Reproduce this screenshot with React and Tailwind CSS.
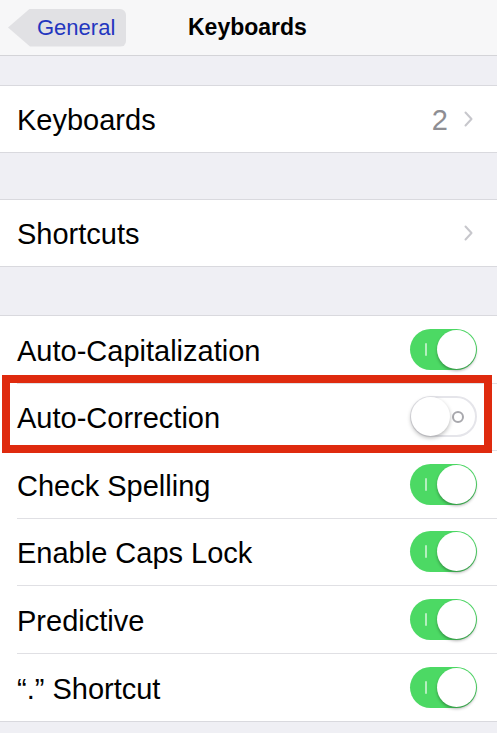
import React from "react";

const Chevron = () => (
  <svg width="9" height="16" viewBox="0 0 9 16" className="shrink-0">
    <polyline
      points="1.5,1.5 7.5,8 1.5,14.5"
      fill="none"
      stroke="#c7c7cc"
      strokeWidth="2"
      strokeLinecap="round"
      strokeLinejoin="round"
    />
  </svg>
);

const Toggle = ({ on }) =>
  on ? (
    <div className="relative w-[67px] h-[41px] rounded-full bg-[#4cd964] shrink-0">
      <div className="absolute left-[15px] top-[14px] w-[2px] h-[13px] rounded-full bg-[#b5efbf]" />
      <div className="absolute right-[1px] top-[1px] w-[39px] h-[39px] rounded-full bg-white shadow-[0_2px_3px_rgba(0,0,0,0.3)]" />
    </div>
  ) : (
    <div className="relative w-[67px] h-[41px] rounded-full bg-white border-2 border-[#e5e5ea] shrink-0">
      <div className="absolute right-[11px] top-[13px] w-[12px] h-[12px] rounded-full border-2 border-[#a8a8ad]" />
      <div className="absolute left-[-1px] top-[-1px] w-[39px] h-[39px] rounded-full bg-white shadow-[0_2px_4px_rgba(0,0,0,0.28)]" />
    </div>
  );

const toggles = [
  { label: "Auto-Capitalization", on: true },
  { label: "Auto-Correction", on: false, marked: true },
  { label: "Check Spelling", on: true },
  { label: "Enable Caps Lock", on: true },
  { label: "Predictive", on: true },
  { label: "\u201c.\u201d Shortcut", on: true },
];

export default function App() {
  return (
    <div
      className="w-[497px] h-[733px] overflow-hidden bg-[#efeff4] text-black"
      style={{ fontFamily: '"Liberation Sans", Arial, sans-serif' }}
    >
      <div className="h-[56px] bg-[#f7f7f8] border-b border-[#d4d4d8] flex items-center relative">
        <div className="ml-[8px] h-[38px] w-[118px] bg-[#e1e1e4] rounded-r-md [clip-path:polygon(22px_0,100%_0,100%_100%,22px_100%,0_50%)] flex items-center pl-[29px] text-[22px] text-[#2336bf]">
          General
        </div>
        <div className="ml-[62px] text-[23px] font-bold">Keyboards</div>
      </div>

      <div className="h-[29px]" />
      <div className="bg-white border-y border-[#d9d9de]">
        <div className="h-[66px] flex items-center pl-[17px] pr-[24px]">
          <span className="text-[29px] flex-1 pt-[4px]">Keyboards</span>
          <span className="text-[29px] text-[#8e8e93] mr-[16px] pt-[4px]">2</span>
          <Chevron />
        </div>
      </div>

      <div className="h-[46px]" />
      <div className="bg-white border-y border-[#d9d9de]">
        <div className="h-[66px] flex items-center pl-[17px] pr-[24px]">
          <span className="text-[29px] flex-1 pt-[4px]">Shortcuts</span>
          <Chevron />
        </div>
      </div>

      <div className="h-[48px]" />
      <div className="bg-white border-y border-[#d9d9de]">
        {toggles.map((t, i) => (
          <div key={t.label} className="relative pl-[17px]">
            <div
              className={`h-[67.5px] flex items-center pr-[20px] ${
                i < toggles.length - 1 ? "border-b border-[#e0e0e4]" : ""
              }`}
            >
              <span className="text-[29px] flex-1 pt-[4px]">{t.label}</span>
              <Toggle on={t.on} />
            </div>
            {t.marked && (
              <div className="absolute left-[2px] right-[5px] top-[-9px] bottom-[-2px] border-[8px] border-[#df2a0e]" />
            )}
          </div>
        ))}
      </div>
    </div>
  );
}
